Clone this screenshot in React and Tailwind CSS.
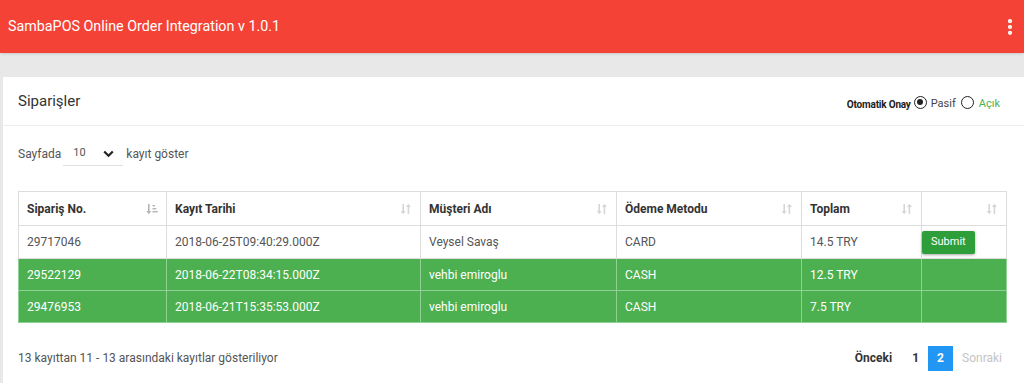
import { EllipsisVertical } from "lucide-react";

const rows = [
  { no: "29717046", date: "2018-06-25T09:40:29.000Z", name: "Veysel Savaş", method: "CARD", total: "14.5 TRY", pending: true },
  { no: "29522129", date: "2018-06-22T08:34:15.000Z", name: "vehbi emiroglu", method: "CASH", total: "12.5 TRY" },
  { no: "29476953", date: "2018-06-21T15:35:53.000Z", name: "vehbi emiroglu", method: "CASH", total: "7.5 TRY" },
];

const cols = [
  { label: "Sipariş No.", w: "w-[148px]", active: true },
  { label: "Kayıt Tarihi", w: "w-[254px]" },
  { label: "Müşteri Adı", w: "w-[196px]" },
  { label: "Ödeme Metodu", w: "w-[185px]" },
  { label: "Toplam", w: "w-[120px]" },
  { label: "", w: "w-[85px]" },
];

const SortIcon = ({ active }) => (
  <svg width="12" height="12" viewBox="0 0 12 12" className={active ? "text-[#b5b5b5]" : "text-[#d6d6d6]"} fill="currentColor">
    {active ? (
      <>
        <rect x="2" y="1" width="1.6" height="8" />
        <path d="M0.3 8 L5.3 8 L2.8 11.2 Z" />
        <rect x="6.5" y="2" width="2.5" height="1.4" />
        <rect x="6.5" y="5" width="3.8" height="1.4" />
        <rect x="6.5" y="8" width="5.2" height="1.4" />
      </>
    ) : (
      <>
        <rect x="2.4" y="1" width="1.6" height="8" />
        <path d="M0.7 8 L5.7 8 L3.2 11.2 Z" />
        <rect x="7.6" y="3" width="1.6" height="8" />
        <path d="M5.9 4 L10.9 4 L8.4 0.8 Z" />
      </>
    )}
  </svg>
);

export default function App() {
  const cell = (pending) => `border ${pending ? "border-[#ddd]" : "border-[#8fd192]"} px-[8px]`;
  return (
    <div className="w-[1024px] h-[383px] overflow-hidden bg-[#e8e8e8] font-['Roboto',sans-serif]">
      <div className="h-[53px] bg-[#f44336] flex items-center justify-between pl-[8px] pr-[4px] shadow-sm">
        <span className="text-white text-[14.3px]">SambaPOS Online Order Integration v 1.0.1</span>
        <EllipsisVertical className="w-[20px] h-[20px] text-white" strokeWidth={3} />
      </div>
      <div className="h-[24px]" />
      <div className="ml-[3px] bg-white h-[306px]">
        <div className="h-[49px] border-b border-[#ececec] flex items-center justify-between pl-[15px] pr-[24px]">
          <span className="text-[15px] text-[#333]">Siparişler</span>
          <div className="flex items-center text-[11px] mt-[6px]">
            <span className="font-bold text-[#222] text-[10px] tracking-[-0.2px]">Otomatik Onay</span>
            <span className="ml-[3px] w-[13px] h-[13px] rounded-full border-[1.5px] border-[#222] flex items-center justify-center mb-[4px]">
              <span className="w-[6px] h-[6px] rounded-full bg-[#222]" />
            </span>
            <span className="ml-[4px] text-[#444]">Pasif</span>
            <span className="ml-[5px] w-[13px] h-[13px] rounded-full border-[1.5px] border-[#222] mb-[4px]" />
            <span className="ml-[5px] text-[#4caf50]">Açık</span>
          </div>
        </div>
        <div className="px-[15px]">
          <div className="h-[56px] flex items-center text-[12px] text-[#555]">
            <span>Sayfada</span>
            <div className="ml-[2px] w-[60px] h-[24px] border-b border-[#e0e0e0] flex items-center justify-between pl-[10px] pr-[9px]">
              <span className="text-[11px]">10</span>
              <svg width="11" height="8" viewBox="0 0 11 8" fill="none" stroke="#222" strokeWidth="2.2">
                <path d="M1.2 1.5 L5.5 5.8 L9.8 1.5" />
              </svg>
            </div>
            <span className="ml-[3px]">kayıt göster</span>
          </div>
          <div className="h-[9px]" />
          <table className="border-collapse text-[12px] text-[#555]">
            <thead>
              <tr className="h-[34px]">
                {cols.map((c, i) => (
                  <th key={i} className={`${c.w} border border-[#ddd] px-[8px] text-left font-bold text-[#333]`}>
                    <div className="flex items-center justify-between">
                      <span>{c.label}</span>
                      <SortIcon active={c.active} />
                    </div>
                  </th>
                ))}
              </tr>
            </thead>
            <tbody>
              {rows.map((r) => (
                <tr key={r.no} className={r.pending ? "h-[33px] bg-white" : "h-[32px] bg-[#4caf50] text-white"}>
                  <td className={cell(r.pending)}>{r.no}</td>
                  <td className={cell(r.pending)}>{r.date}</td>
                  <td className={cell(r.pending)}>{r.name}</td>
                  <td className={cell(r.pending)}>{r.method}</td>
                  <td className={cell(r.pending)}>{r.total}</td>
                  <td className={`border ${r.pending ? "border-[#ddd]" : "border-[#8fd192]"} px-0`}>
                    {r.pending && (
                      <button className="h-[23px] px-[9px] bg-[#2e9e3a] text-white text-[11px] rounded-[2px] shadow-[0_1px_3px_rgba(0,0,0,0.35)]">
                        Submit
                      </button>
                    )}
                  </td>
                </tr>
              ))}
            </tbody>
          </table>
          <div className="h-[66px] flex items-center justify-between pt-[4px]">
            <span className="text-[12px] text-[#555]">13 kayıttan 11 - 13 arasındaki kayıtlar gösteriliyor</span>
            <div className="flex items-center text-[12px]">
              <span className="font-bold text-[#333] pr-[11px]">Önceki</span>
              <span className="font-bold text-[#333] px-[9px]">1</span>
              <span className="w-[25px] h-[25px] bg-[#2196f3] text-white font-bold flex items-center justify-center">2</span>
              <span className="text-[#c4c4c4] pl-[9px] pr-[7px]">Sonraki</span>
            </div>
          </div>
        </div>
      </div>
    </div>
  );
}
